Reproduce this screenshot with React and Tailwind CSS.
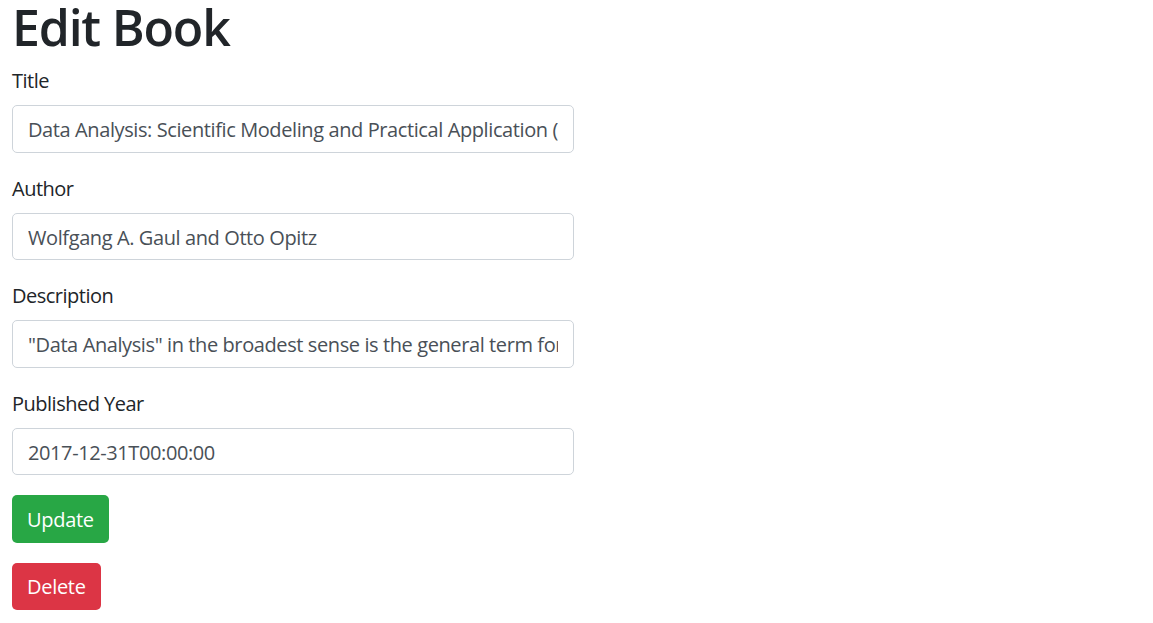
const fields = [
  { label: 'Title', value: 'Data Analysis: Scientific Modeling and Practical Application (Studies in Classification, Data Analysis, and Knowledge Organization)' },
  { label: 'Author', value: 'Wolfgang A. Gaul and Otto Opitz' },
  { label: 'Description', value: '"Data Analysis" in the broadest sense is the general term for a field of activities of ever-increasing importance' },
  { label: 'Published Year', value: '2017-12-31T00:00:00' },
];

export default function App() {
  return (
    <div className="px-3 text-[#212529] bg-white min-h-[623px]" style={{ fontFamily: '"Open Sans", "Noto Sans", sans-serif' }}>
      <h1 className="text-[50px] leading-[54px] font-semibold tracking-[-1.2px] mb-[11px]">Edit Book</h1>
      <form className="flex flex-col items-start">
        {fields.map((f) => (
          <div key={f.label} className="w-[562px] mb-[20px]">
            <label className="block h-[30px] text-[20px] leading-[32px] tracking-[-0.5px] mb-[10px]">{f.label}</label>
            <input
              type="text"
              readOnly
              value={f.value}
              className="block w-full h-[47.5px] px-[15px] pt-[2px] border border-[#ced4da] rounded-[5px] text-[20px] tracking-[-0.4px] text-[#495057] bg-white outline-none"
            />
          </div>
        ))}
        <button type="button" className="h-[47.5px] px-[15px] pt-[2px] rounded-[5px] bg-[#28a745] text-white text-[20px] leading-[30px] tracking-[-0.3px] mb-[20px]">Update</button>
        <button type="button" className="h-[47px] px-[15px] pt-[2px] rounded-[5px] bg-[#dc3545] text-white text-[20px] leading-[30px] tracking-[-0.3px]">Delete</button>
      </form>
    </div>
  );
}
